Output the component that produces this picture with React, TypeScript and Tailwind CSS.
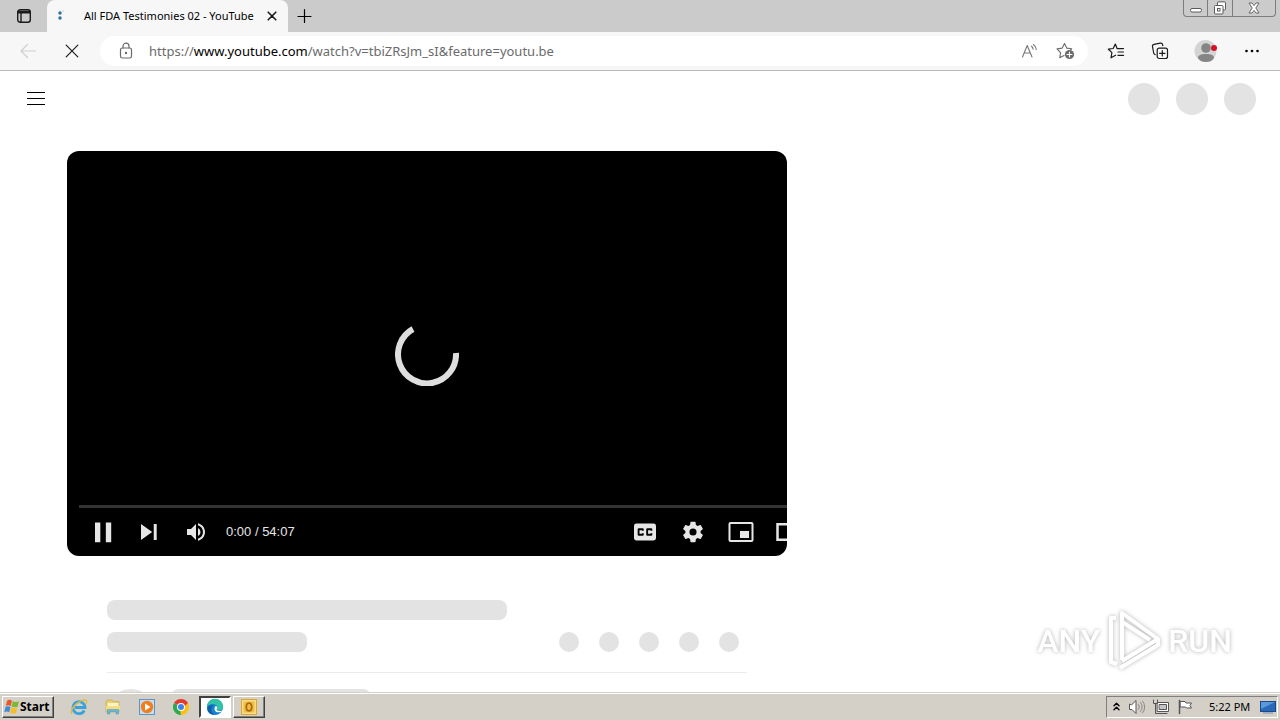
import type { ReactNode } from 'react';

function IconButton({
  label,
  className,
  children,
}: {
  label: string;
  className: string;
  children: ReactNode;
}) {
  return (
    <button
      type="button"
      aria-label={label}
      className={`flex shrink-0 items-center justify-center ${className}`}
    >
      {children}
    </button>
  );
}

const line = {
  fill: 'none',
  stroke: 'currentColor',
  strokeLinecap: 'round' as const,
  strokeLinejoin: 'round' as const,
};

function TabStrip() {
  return (
    <div className="flex h-8 shrink-0 items-start bg-[#cbcbcb]">
      <IconButton label="Tab actions" className="h-8 w-[47px] text-[#1b1b1b]">
        <svg width="16" height="16" viewBox="0 0 16 16" {...line} strokeWidth="1.4">
          <rect x="1.7" y="1.7" width="12.6" height="12.6" rx="2.5" />
          <path d="M2 3.5h12M2 4.8h12M5 5v9" />
        </svg>
      </IconButton>

      <div className="flex h-8 w-[241px] items-center rounded-t-lg bg-[#f7f7f7] px-2">
        <svg width="16" height="16" viewBox="0 0 16 16" fill="#2a6f9e">
          <circle cx="5" cy="5" r="1.7" />
          <circle cx="5" cy="10" r="1.7" />
          <circle cx="8" cy="3" r="0.8" opacity="0.25" />
        </svg>
        <span className="ml-[13px] flex-1 whitespace-nowrap text-[11px] leading-4 text-black">
          All FDA Testimonies 02 - YouTube
        </span>
        <IconButton label="Close tab" className="size-4 text-[#1b1b1b]">
          <svg width="10" height="10" viewBox="0 0 10 10" {...line} strokeWidth="1.6">
            <path d="M1.2 1.2l7.6 7.6M8.8 1.2L1.2 8.8" />
          </svg>
        </IconButton>
      </div>

      <IconButton label="New tab" className="size-8 text-black">
        <svg width="16" height="16" viewBox="0 0 16 16" {...line} strokeWidth="1.2">
          <path d="M8.5 1.5v13M2 8.5h13" />
        </svg>
      </IconButton>

      <div className="ml-auto mr-1 flex h-[17px] divide-x divide-[#7d7d7d] rounded-b border border-t-0 border-[#7d7d7d] text-[#5a5a5a]">
        <IconButton label="Minimize" className="w-6">
          <svg width="12" height="14" viewBox="0 0 12 14" fill="#fff" stroke="currentColor">
            <rect x="0.5" y="7.5" width="11" height="3.5" rx="1.5" />
          </svg>
        </IconButton>
        <IconButton label="Restore" className="w-[25px]">
          <svg width="14" height="14" viewBox="0 0 14 14" fill="#fff" stroke="currentColor">
            <rect x="4.5" y="0.9" width="8" height="8" rx="1" />
            <rect x="1.5" y="4.5" width="8.5" height="8.5" rx="1" />
            <rect x="4.5" y="7.5" width="2.5" height="2.5" />
          </svg>
        </IconButton>
        <IconButton label="Close" className="w-[42px]">
          <svg width="12" height="12" viewBox="0 0 12 12" fill="#fff" stroke="currentColor" strokeWidth="0.9">
            <path d="M1 1h3l2 2.6L8 1h3L7.8 6 11 11H8L6 8.4 4 11H1l3.2-5z" />
          </svg>
        </IconButton>
      </div>
    </div>
  );
}

function Toolbar() {
  return (
    <div className="flex h-[39px] shrink-0 items-center border-b border-[#b9b9b9] bg-[#f7f7f7] px-[6px]">
      <IconButton label="Back" className="h-8 w-11 text-[#cfcfcf]">
        <svg width="16" height="16" viewBox="0 0 16 16" {...line} strokeWidth="1.2">
          <path d="M15.5 8H1M7.5 1.5L1 8l6.5 6.5" />
        </svg>
      </IconButton>
      <IconButton label="Stop loading" className="h-8 w-11 text-[#1b1b1b]">
        <svg width="14" height="14" viewBox="0 0 14 14" {...line} strokeWidth="1.2">
          <path d="M1.2 1.2l11.6 11.6M12.8 1.2L1.2 12.8" />
        </svg>
      </IconButton>

      <div className="relative mx-[6px] flex h-[30px] min-w-0 flex-1 items-center rounded-full bg-white pl-[18px] pr-1">
        <svg className="shrink-0 text-[#6b6b6b]" width="16" height="18" viewBox="0 0 16 18" {...line} strokeWidth="1.2">
          <rect x="2.5" y="6" width="11" height="10" rx="1.8" />
          <path d="M5 6V4.2a3 3 0 0 1 6 0V6" />
          <circle cx="8" cy="11" r="0.6" fill="currentColor" />
        </svg>
        <span className="ml-[15px] flex-1 truncate text-[13px] leading-5 text-[#6b6b6b]">
          https://<span className="text-black">www.youtube.com</span>
          /watch?v=tbiZRsJm_sI&amp;feature=youtu.be
        </span>
        <input
          type="text"
          aria-label="Address and search bar"
          className="absolute inset-y-0 left-12 right-20 bg-transparent outline-none"
        />
        <IconButton label="Read aloud" className="h-6 w-9 text-[#777]">
          <svg width="18" height="16" viewBox="0 0 18 16" {...line} strokeWidth="1.1">
            <path d="M1.5 14L6.2 2.5 11 14M3.2 10h6.1" />
            <path d="M10.5 3.2a4 4 0 0 1 1.6 3M12.3 1.5a6.5 6.5 0 0 1 3 5" />
          </svg>
        </IconButton>
        <IconButton label="Add to favorites" className="h-6 w-9 text-[#6b6b6b]">
          <svg width="20" height="18" viewBox="0 0 20 18" {...line} strokeWidth="1.1">
            <path d="M8.5 1.5l2.2 4.6 5 .7-1.8 1.8M8 13.4l-4.2 2.3.8-5L1 6.9l5.2-.8 2.3-4.6" />
            <circle cx="13.5" cy="12.5" r="4.6" fill="currentColor" stroke="none" />
            <path d="M13.5 10v5M11 12.5h5" stroke="#fff" />
          </svg>
        </IconButton>
      </div>

      <IconButton label="Favorites" className="h-8 w-11 text-[#1b1b1b]">
        <svg width="18" height="18" viewBox="0 0 18 18" {...line} strokeWidth="1.2">
          <path d="M10 6.2L8.3 2 6.2 6.5l-4.8.7 3.5 3.4-.9 5.2 4.6-2.6" />
          <path d="M10.2 6.6h6.3M11 10h5.5M11 13.4h5.5" />
        </svg>
      </IconButton>
      <IconButton label="Collections" className="h-8 w-11 text-[#1b1b1b]">
        <svg width="18" height="18" viewBox="0 0 18 18" {...line} strokeWidth="1.2">
          <rect x="6.2" y="6.2" width="10.3" height="10.3" rx="2" />
          <path d="M11.3 8.6v5.4M8.6 11.3H14" />
          <path d="M4.2 12.6l-.6-.3a2 2 0 0 1-.9-1.3L1.5 4.7A2 2 0 0 1 3 2.4l6.3-1.2a2 2 0 0 1 2.3 1.5l.2 1" />
        </svg>
      </IconButton>
      <IconButton label="Profile" className="h-8 w-[46px]">
        <svg width="24" height="24" viewBox="0 0 24 24">
          <circle cx="12.5" cy="12" r="11" fill="#d3d5d2" />
          <circle cx="13" cy="9" r="4.8" fill="#858585" />
          <path d="M5 19c0-3 3-4 8-4s8 1 8 4c-2 3-4.5 4-8 4s-6-1-8-4z" fill="#858585" />
          <circle cx="21" cy="9" r="3" fill="#d80f22" />
        </svg>
      </IconButton>
      <IconButton label="Settings and more" className="h-8 w-[46px] text-black">
        <svg width="16" height="4" viewBox="0 0 16 4" fill="currentColor">
          <circle cx="3.5" cy="2" r="1.3" />
          <circle cx="9" cy="2" r="1.3" />
          <circle cx="14.5" cy="2" r="1.3" />
        </svg>
      </IconButton>
    </div>
  );
}

function Masthead() {
  return (
    <header className="flex h-14 shrink-0 items-center justify-between px-6">
      <IconButton label="Guide" className="size-6 text-black">
        <svg width="18" height="14" viewBox="0 0 18 14" fill="currentColor">
          <path d="M0 0h18v1H0zM0 6h18v1H0zM0 12h18v1H0z" />
        </svg>
      </IconButton>
      <div className="flex gap-4">
        <div className="size-8 rounded-full bg-[#e3e3e3]" />
        <div className="size-8 rounded-full bg-[#e3e3e3]" />
        <div className="size-8 rounded-full bg-[#e3e3e3]" />
      </div>
    </header>
  );
}

function Player() {
  return (
    <div className="relative flex aspect-video flex-col justify-end overflow-hidden rounded-xl bg-black text-[#e6e6e6]">
      {/* buffering ring, laid over the whole video */}
      <div className="pointer-events-none absolute inset-0 flex items-center justify-center">
        <svg width="64" height="64" viewBox="0 0 64 64" fill="none" stroke="#dedede" strokeWidth="6">
          <path d="M61 31A29 29 0 1 1 18 7" />
        </svg>
      </div>
      <div className="ml-3 h-[3px] bg-[#333]" />
      <div className="ml-3 flex h-12 items-center">
        <IconButton label="Pause" className="h-12 w-[46px]">
          <svg width="46" height="46" viewBox="0 0 36 36" fill="currentColor">
            <path d="M12.5 26h4.2V10.500h-4.200zM21 26h4.200V10.500H21z" />
          </svg>
        </IconButton>
        <IconButton label="Next" className="h-12 w-[46px]">
          <svg width="46" height="46" viewBox="0 0 36 36" fill="currentColor">
            <path d="M12.500 24.300l8.800-6.300-8.800-6.300v12.600zM22.500 11.700v12.600h2.300V11.700z" />
          </svg>
        </IconButton>
        <IconButton label="Mute" className="h-12 w-[50px]">
          <svg width="24" height="24" viewBox="0 0 24 24" fill="currentColor">
            <path d="M3 9v6h4l5 5V4L7 9H3zm13.500 3A4.500 4.500 0 0 0 14 7.970v8.050c1.480-.73 2.500-2.250 2.500-4.020zM14 3.230v2.060c2.890.86 5 3.540 5 6.710s-2.110 5.850-5 6.710v2.060c4.010-.91 7-4.490 7-8.770s-2.990-7.860-7-8.770z" />
          </svg>
        </IconButton>
        <span className="ml-[5px] font-['Liberation_Sans',sans-serif] text-[13px] leading-4">0:00 / 54:07</span>

        {/* the last button runs past the player's edge and is cut by it */}
        <div className="-mr-[26px] ml-auto flex">
          <IconButton label="Subtitles" className="h-12 w-12">
            <svg width="44" height="44" viewBox="0 0 36 36" fill="currentColor">
              <path d="M11 11a2 2 0 0 0-2 2v10c0 1.100.9 2 2 2h14a2 2 0 0 0 2-2V13a2 2 0 0 0-2-2H11zm6 6h-1.500v-.5h-2v3h2V19H17v1a1 1 0 0 1-1 1h-3a1 1 0 0 1-1-1v-4a1 1 0 0 1 1-1h3a1 1 0 0 1 1 1v1zm7 0h-1.500v-.5h-2v3h2V19H24v1a1 1 0 0 1-1 1h-3a1 1 0 0 1-1-1v-4a1 1 0 0 1 1-1h3a1 1 0 0 1 1 1v1z" />
            </svg>
          </IconButton>
          <IconButton label="Settings" className="h-12 w-12">
            <svg width="46" height="46" viewBox="0 0 36 36" fill="currentColor">
              <path d="m23.940 18.780c.03-.25.05-.51.05-.78s-.02-.52-.05-.78l1.680-1.320c.15-.12.19-.33.09-.51l-1.600-2.760c-.09-.17-.31-.24-.48-.17l-1.990.8c-.41-.32-.86-.58-1.350-.78l-.3-2.120c-.02-.19-.19-.33-.39-.33h-3.200c-.2 0-.36.14-.39.33l-.3 2.120c-.48.2-.93.47-1.350.78l-1.990-.8c-.18-.07-.39 0-.48.17l-1.600 2.760c-.1.17-.05.39.09.51l1.680 1.320c-.03.25-.05.52-.05.78s.02.52.05.78l-1.680 1.320c-.15.12-.19.33-.09.51l1.600 2.760c.09.17.31.24.48.17l1.990-.8c.41.32.86.58 1.350.78l.3 2.120c.02.19.19.33.39.33h3.200c.2 0 .36-.14.39-.33l.3-2.120c.48-.2.93-.47 1.350-.78l1.990.8c.18.07.39 0 .48-.17l1.600-2.760c.09-.17.05-.39-.09-.51l-1.680-1.320zM18 20.790a2.800 2.800 0 1 1 0-5.600 2.800 2.800 0 0 1 0 5.600z" />
            </svg>
          </IconButton>
          <IconButton label="Miniplayer" className="h-12 w-12">
            <svg width="26" height="20" viewBox="0 0 26 20" fill="none" stroke="currentColor" strokeWidth="2">
              <rect x="1.5" y="1" width="23" height="18" rx="1" />
              <rect x="12" y="9" width="9" height="7" fill="currentColor" stroke="none" />
            </svg>
          </IconButton>
          <IconButton label="Theater mode" className="h-12 w-12">
            <svg width="26" height="18" viewBox="0 0 26 18" fill="none" stroke="currentColor" strokeWidth="2.5">
              <rect x="1.5" y="1.250" width="23" height="15.500" />
            </svg>
          </IconButton>
        </div>
      </div>
    </div>
  );
}

const actions = ['like', 'dislike', 'share', 'save', 'more'];

function Metadata() {
  return (
    <div className="mx-10 mt-11">
      <div className="h-5 w-[400px] rounded-lg bg-[#e3e3e3]" />
      <div className="mt-3 flex justify-between border-b border-[#ebebeb] pb-5 pr-2">
        <div className="h-5 w-[200px] rounded-lg bg-[#e3e3e3]" />
        <div className="flex gap-5">
          {actions.map((a) => (
            <div key={a} className="size-5 rounded-full bg-[#e3e3e3]" />
          ))}
        </div>
      </div>
      <div className="mt-4 flex gap-4">
        <div className="size-12 rounded-full bg-[#e3e3e3]" />
        <div className="h-5 w-[200px] rounded-lg bg-[#e3e3e3]" />
      </div>
    </div>
  );
}

function Watermark() {
  return (
    <div className="pointer-events-none absolute bottom-5 right-12 flex items-center gap-1 font-['Roboto',sans-serif] text-[32px] font-medium leading-10 text-white drop-shadow-[0_0_2px_rgba(0,0,0,0.3)]">
      <span>ANY</span>
      <svg width="60" height="62" viewBox="0 0 60 62" fill="none" stroke="#fff" strokeWidth="4" strokeLinejoin="round">
        <path d="M12 8H7v44l6 2M18 50V3l36 26-36 22M18 12l28 18M16 58l38-23v-6" />
      </svg>
      <span>RUN</span>
    </div>
  );
}

function Taskbar() {
  return (
    <footer className="flex h-7 shrink-0 items-center border-t border-[#d4d0c8] bg-[#d4d0c8] px-[2px] shadow-[inset_0_1px_0_#fff]">
      <button
        type="button"
        className="flex h-[22px] w-[52px] items-center border border-b-[#404040] border-l-white border-r-[#404040] border-t-white pl-[1px] text-[12px] font-bold leading-4 text-black shadow-[inset_-1px_-1px_0_#808080]"
      >
        <svg className="shrink-0" width="16" height="16" viewBox="0 0 16 16">
          <path d="M3.200 1.500c2-1 3.300-.8 4.800.2L6.800 7c-1.500-1-3-1.100-4.900-.2z" fill="#e8562a" />
          <path d="M8.800 2.200c1.700 1 4 1 6.200.1L13.600 7.700c-1.800.9-3.900.8-6-.2z" fill="#7db733" />
          <path d="M1.600 7.800c2-.9 3.500-.8 4.900.2l-1.300 5.300c-1.500-1-3-1.100-4.900-.2z" fill="#3d8ad6" />
          <path d="M7.300 8.500c2.100 1 4.200 1 6 .2l-1.400 5.300c-1.800.9-3.900.8-6-.2z" fill="#f6bd27" />
        </svg>
        Start
      </button>

      <nav aria-label="Taskbar" className="ml-2 flex items-center">
        <IconButton label="Internet Explorer" className="h-[22px] w-[34px]">
          <svg width="18" height="18" viewBox="0 0 18 18" fill="none">
            <path d="M14.300 12.500A6 6 0 1 1 15 9.500H5" stroke="#3aa3dc" strokeWidth="2.800" />
            <path d="M2 16C-1 13 7 2.500 15 1.800c2.500 0 2 2.700.8 4.400" stroke="#e5b93a" strokeWidth="1.300" />
          </svg>
        </IconButton>
        <IconButton label="Windows Explorer" className="h-[22px] w-[34px]">
          <svg width="18" height="18" viewBox="0 0 18 18">
            <path d="M2 4l1-2h5l1 1.500h6V14H2z" fill="#e9cf71" stroke="#c6a744" strokeWidth="0.7" />
            <path d="M3.500 5h11v5h-11z" fill="#fbf3c4" />
            <path d="M1.500 8h15l-1 4H2.500z" fill="#f4dd84" />
            <path d="M3.500 16v-4.500h11V16h-2.500v-2.500H6V16z" fill="#63b9dc" stroke="#4796b8" strokeWidth="0.5" />
          </svg>
        </IconButton>
        <IconButton label="Media Player" className="h-[22px] w-[34px]">
          <svg width="18" height="18" viewBox="0 0 18 18">
            <rect x="1.500" y="1.500" width="15" height="15" fill="#c9ddf2" stroke="#5d93cb" />
            <circle cx="9" cy="9" r="6.200" fill="#f07f1b" />
            <path d="M7 5.500v7L12.500 9z" fill="#fff" />
          </svg>
        </IconButton>
        <IconButton label="Google Chrome" className="h-[22px] w-[34px]">
          <svg width="16" height="16" viewBox="0 0 16 16">
            <path d="M8 8L1.070 4A8 8 0 0 1 14.930 4z" fill="#e33b2e" />
            <path d="M8 8l6.930-4A8 8 0 0 1 8 16z" fill="#fbc116" />
            <path d="M8 8v8A8 8 0 0 1 1.070 4z" fill="#2da94f" />
            <path d="M8 4h6.930L11 8z" fill="#e33b2e" />
            <path d="M11.460 10L8 16l-1-5z" fill="#fbc116" />
            <circle cx="8" cy="8" r="4" fill="#fff" />
            <circle cx="8" cy="8" r="3" fill="#3f82ee" />
          </svg>
        </IconButton>
        <IconButton
          label="Microsoft Edge"
          className="ml-[1px] h-[22px] w-8 border-2 border-b-white border-l-[#404040] border-r-white border-t-[#404040] bg-white"
        >
          <svg width="18" height="18" viewBox="0 0 18 18">
            <circle cx="9" cy="9" r="8" fill="#1583cf" />
            <path d="M1 8.500A8 8 0 0 1 17 9c0 2.500-2 3.500-4 3.500-1.500 0-2.500-.5-2.500-1.200 0-.5.700-.8.700-1.900C11.200 7.500 9.500 6 7 6 4 6 1.800 7 1 8.500z" fill="#31c3a6" />
            <path d="M8.500 11c0-1.500.3-2.500 1.200-3 1 .3 1.500 1 1.500 1.700 0 .8-.7 1-.7 1.600 0 .8 1.200 1.700 3 1.700 1 0 2-.2 2.800-.6-1.300 1.900-3.300 2.100-4.800 1.900-1.500-.2-3-1.800-3-3.300z" fill="#fff" />
            <path d="M1.200 11c0 3 3.200 6 7.800 6-3-1.500-4.300-4-3.500-7 .3-1 1-2 2-2.600C4 6.800 1.200 8 1.200 11z" fill="#0f5ea8" />
          </svg>
        </IconButton>
        <IconButton
          label="Outlook"
          className="ml-[2px] h-[22px] w-8 border border-b-[#404040] border-l-white border-r-[#404040] border-t-white shadow-[inset_-1px_-1px_0_#808080]"
        >
          <svg width="16" height="16" viewBox="0 0 16 16">
            <rect x="0.500" y="0.500" width="15" height="15" fill="#f9dc83" stroke="#dfa531" />
            <rect x="2.500" y="2.500" width="11" height="11" fill="#f3bd45" />
            <ellipse cx="8" cy="8" rx="2.700" ry="3.800" fill="none" stroke="#a86a10" strokeWidth="1.800" />
          </svg>
        </IconButton>
      </nav>

      <div className="ml-auto flex h-[22px] w-[172px] items-center border border-b-white border-l-[#808080] border-r-white border-t-[#808080] pl-1 pr-[1px] text-[#555]">
        <IconButton label="Show hidden icons" className="h-5 w-[10px] text-black">
          <svg width="7" height="9" viewBox="0 0 7 9" {...line} strokeWidth="1.4">
            <path d="M1 3.800L3.500 1.300 6 3.800M1 7.800l2.500-2.500L6 7.800" />
          </svg>
        </IconButton>
        <IconButton label="Volume" className="ml-1 h-5 w-6">
          <svg width="18" height="16" viewBox="0 0 18 16" {...line}>
            <path d="M1.500 5.500v5H4l4 4v-13l-4 4z" fill="#fff" />
            <path d="M10.500 5.500a4 4 0 0 1 0 5M12.500 3.500a6.500 6.500 0 0 1 0 9M14.500 2a9 9 0 0 1 0 12" stroke="#888" />
          </svg>
        </IconButton>
        <IconButton label="Network" className="h-5 w-6">
          <svg width="18" height="16" viewBox="0 0 18 16" {...line}>
            <rect x="5.500" y="3.500" width="11" height="9" fill="#fff" />
            <rect x="7.500" y="5.500" width="7" height="5" fill="#c4c4c4" />
            <path d="M1.500 1v3.500h4V1M3.500 4.500v10h9M8 14.500h7" />
          </svg>
        </IconButton>
        <IconButton label="Action Center" className="h-5 w-6">
          <svg width="16" height="16" viewBox="0 0 16 16" {...line}>
            <path d="M2.500 1.500v13" strokeWidth="1.500" />
            <path d="M3.500 2.500H8L9 4h5.500L13 6.500 14.500 9h-5L8.500 8h-5z" fill="#fff" />
          </svg>
        </IconButton>
        <time className="ml-3 flex-1 whitespace-nowrap text-[11px] leading-4 text-black">5:22 PM</time>
        <IconButton label="Show desktop" className="h-5 w-4">
          <svg width="16" height="14" viewBox="0 0 16 14">
            <rect x="0.500" y="1.500" width="15" height="10" fill="#2a68b8" stroke="#1b4a8c" />
            <path d="M1 2h14L1 9z" fill="#5a98dc" />
            <path d="M3 13h10" stroke="#6f8db3" />
          </svg>
        </IconButton>
      </div>
    </footer>
  );
}

export default function App() {
  return (
    <div className="flex h-screen flex-col overflow-hidden bg-white font-['Noto_Sans','Open_Sans',sans-serif]">
      <TabStrip />
      <Toolbar />
      <main className="relative min-h-0 flex-1 overflow-hidden bg-white">
        <Masthead />
        <div className="ml-[67px] mt-6 w-[56.25%]">
          <Player />
          <Metadata />
        </div>
        <Watermark />
      </main>
      <Taskbar />
    </div>
  );
}
